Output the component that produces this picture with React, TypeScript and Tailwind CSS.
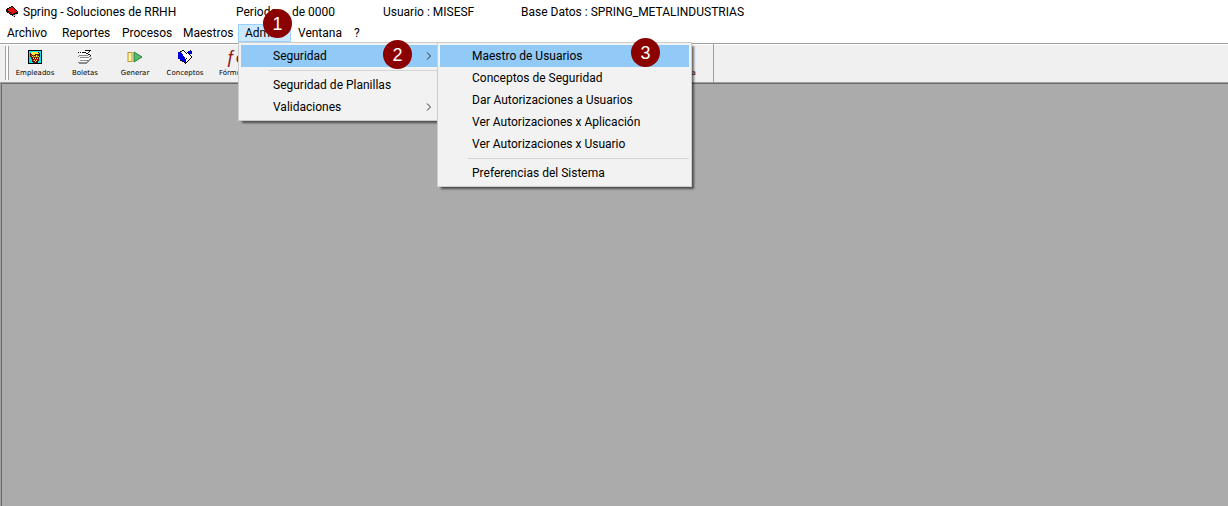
import React from 'react';

interface MenuEntry {
  label: string;
  active?: boolean;
  submenu?: boolean;
  separated?: boolean;
}

const adminMenu: MenuEntry[] = [
  { label: 'Seguridad', active: true, submenu: true },
  { label: 'Seguridad de Planillas', separated: true },
  { label: 'Validaciones', submenu: true },
];

const seguridadMenu: MenuEntry[] = [
  { label: 'Maestro de Usuarios', active: true },
  { label: 'Conceptos de Seguridad' },
  { label: 'Dar Autorizaciones a Usuarios' },
  { label: 'Ver Autorizaciones x Aplicación' },
  { label: 'Ver Autorizaciones x Usuario' },
  { label: 'Preferencias del Sistema', separated: true },
];

const BookIcon = () => (
  <svg width="12" height="12" viewBox="0 0 12 12" shapeRendering="crispEdges">
    <path d="M0 3h1V2h2V1h2V0h2v1h1v1h1v1h1v1h1v1h1v3h-1v1h-1v1H9v1H7v-1H6v-1H4V8H3V7H1V6H0z" fill="#111" />
    <path d="M2 3h1V2h2V1h2v1h1v1h1v1h1v1h1v1H9v1H7v1H6V7H5V6H3V5H2z" fill="#e81010" />
    <path d="M7 9h2V8h2v1h-1v1H8v1H7z" fill="#c8c8c8" />
    <path d="M1 5h1v1h2v1h1v1H4V7H2V6H1z" fill="#8b0000" />
  </svg>
);

const EmpleadosIcon = () => (
  <svg width="14" height="14" viewBox="0 0 14 14" shapeRendering="crispEdges">
    <path d="M0 0h14v14H0z" fill="#000" />
    <path d="M1 1h12v12H1z" fill="#00e5ee" />
    <path d="M3 2h8v1h1v4h-1v4h-1v2H5v-1H4V9H3V7H2V3h1z" fill="#5a1000" />
    <path d="M3 2h7v1h1v1H7v1H4V4H3zM4 6h1v1H4zM6 6h1v1H6zM8 5h1v2H8zM10 6h1v1h-1zM5 8h1v1H5zM7 8h1v1H7zM9 8h1v1H9zM6 10h1v1H6zM8 10h1v1H8zM7 11h1v1H7z" fill="#ffe83a" />
    <path d="M3 5h1v1H3zM5 5h1v3H5zM7 6h1v2H7zM9 5h1v3H9zM6 9h1v1H6zM8 9h1v1H8zM5 10h1v1H5z" fill="#f03010" />
  </svg>
);

const BoletasIcon = () => (
  <svg width="16" height="16" viewBox="0 0 16 16" shapeRendering="crispEdges">
    <path d="M4 2h10v2l-3 2H3V4zM4 9h9l-3 5H2z" fill="#fff" />
    <path d="M8 1h6v1H8zM12 2h1v1h-1zM11 3h1v1h-1zM9 4h2v1H9zM11 5h2v1h-2zM13 6h1v1h-1zM5 3h4v1H5zM1 3h1v1H1zM3 3h1v1H3z" fill="#111" />
    <path d="M2 6h9v1H2zM1 7h1v1H1zM12 7h2v1h-2zM11 8h1v1h-1zM3 8h9v1H3zM13 9h2v1h-2zM12 10h2v1h-2zM11 11h2v1h-2zM10 12h2v1h-2zM3 11h8v1H3zM1 13h10v1H1zM2 14h8v1H2z" fill="#8a8a8a" />
  </svg>
);

const GenerarIcon = () => (
  <svg width="16" height="12" viewBox="0 0 16 12">
    <rect x="1" y="1.5" width="4" height="9" fill="#fff3a8" stroke="#c29a25" />
    <path d="M7 1v10l8-5z" fill="#58b96b" stroke="#268443" />
  </svg>
);

const ConceptosIcon = () => (
  <svg width="16" height="16" viewBox="0 0 16 16" shapeRendering="crispEdges">
    <path d="M4 3l5-1 5 6-6 6z" fill="#fff" />
    <path d="M1 3h3v1h1v1h1v2h1v1h1v2h1v4H7v-1H5v-1H4v-1H3v-1H1z" fill="#0000d8" />
    <path d="M11 2h3v3h-2V4h-1z" fill="#0000d8" />
    <path d="M3 2h2v1H3zM5 1h2v1H5zM7 2h1v1H7zM8 3h1v1H8zM9 4h1v1H9zM10 3h1v1h-1zM11 4h1v1h-1zM12 5h1v1h-1zM13 6h1v1h-1zM14 7h1v2h-1zM13 9h1v1h-1zM12 10h1v1h-1zM11 11h1v1h-1zM10 12h1v1h-1zM9 13h1v1H9zM8 14h1v1H8zM7 13h1v1H7zM5 12h2v1H5zM3 11h2v1H3zM13 1h1v1h-1zM14 2h1v3h-1zM8 10h1v3H8zM9 9h1v1H9z" fill="#000" />
  </svg>
);

const FormulasIcon = () => (
  <span className="font-['Liberation_Sans',sans-serif] text-lg leading-5 text-[#8b1a1a]">
    ƒ<b className="text-sm">e</b>
  </span>
);

const tools = [
  { label: 'Empleados', icon: <EmpleadosIcon /> },
  { label: 'Boletas', icon: <BoletasIcon /> },
  { label: 'Generar', icon: <GenerarIcon /> },
  { label: 'Conceptos', icon: <ConceptosIcon /> },
  { label: 'Fórmulas', icon: <FormulasIcon /> },
];

const ToolButton: React.FC<{ label: string; icon?: React.ReactNode }> = ({ label, icon }) => (
  <button type="button" className="flex w-[50px] shrink-0 flex-col items-center pt-[3px]">
    <span className="flex h-5 items-center justify-center">{icon}</span>
    <span className="mt-px font-['DejaVu_Sans',sans-serif] text-[7px] leading-[10px]">{label}</span>
  </button>
);

const Badge: React.FC<{ value: number; className: string }> = ({ value, className }) => (
  <span
    className={`absolute z-30 flex size-[29px] items-center justify-center rounded-full bg-[#8b0000] font-['Liberation_Sans',sans-serif] text-lg leading-none text-white ${className}`}
  >
    {value}
  </span>
);

const PopupMenu: React.FC<{ items: MenuEntry[]; className: string; children?: React.ReactNode }> = ({ items, className, children }) => (
  <div className={`absolute border border-[#ccc] bg-[#f2f2f2] p-0.5 shadow-[3px_3px_2px_-1px_rgba(0,0,0,0.55)] ${className}`}>
    {items.map((item) => (
      <React.Fragment key={item.label}>
        {item.separated && <hr className="my-[3px] ml-7 border-[#d4d4d4]" />}
        <button
          type="button"
          className={`flex h-[22px] w-full items-center justify-between whitespace-nowrap pr-1 pl-8 text-left ${item.active ? 'bg-[#91c9f7]' : ''}`}
        >
          {item.label}
          {item.submenu && (
            <svg width="8" height="8" viewBox="0 0 8 8" fill="none" stroke="#333">
              <path d="M2 0.5 5.5 4 2 7.5" />
            </svg>
          )}
        </button>
      </React.Fragment>
    ))}
    {children}
  </div>
);

const App: React.FC = () => {
  return (
    <div className="flex min-h-screen flex-col overflow-x-hidden bg-[#ababab] font-['Roboto','Open_Sans',sans-serif] text-[12px] leading-4 text-black">
      {/* Title bar */}
      <header className="flex h-6 items-center bg-white pl-1.5 whitespace-nowrap">
        <BookIcon />
        <span className="ml-[5px] w-[213px]">Spring - Soluciones de RRHH</span>
        <span className="w-14">Periodo</span>
        <span className="w-[91px]">de 0000</span>
        <span className="w-[138px]">Usuario : MISESF</span>
        <span>Base Datos : SPRING_METALINDUSTRIAS</span>
      </header>

      {/* Menu bar */}
      <nav className="flex h-[19px] items-start bg-white">
        <button type="button" className="h-[18px] w-[55px] pl-[7px] text-left">Archivo</button>
        <button type="button" className="h-[18px] w-[60px] pl-[7px] text-left">Reportes</button>
        <button type="button" className="h-[18px] w-[61px] pl-[7px] text-left">Procesos</button>
        <button type="button" className="h-[18px] w-[62px] pl-[7px] text-left">Maestros</button>
        <div className="relative h-[18px] w-[53px]">
          <button type="button" className="h-[18px] w-full border border-[#99d1ff] bg-[#cce8ff] pl-1.5 text-left">Admin.</button>
          <Badge value={1} className="-top-[15px] left-[25px]" />
          <PopupMenu items={adminMenu} className="top-[18px] left-0 z-10 w-[202px]">
            <Badge value={2} className="-top-[3px] left-[144px]" />
            <PopupMenu items={seguridadMenu} className="-top-px left-[198px] z-20 w-[255px]">
              <Badge value={3} className="-top-[5px] left-[193px]" />
            </PopupMenu>
          </PopupMenu>
        </div>
        <button type="button" className="h-[18px] w-14 pl-[7px] text-left">Ventana</button>
        <button type="button" className="h-[18px] px-[7px]">?</button>
      </nav>

      {/* Toolbar */}
      <div className="flex h-10 border-y border-[#a0a0a0] bg-[#f0f0f0] pl-[5px] shadow-[inset_0_1px_#fff]">
        <div className="my-0.5 mr-px w-1 border-x border-[#a0a0a0] bg-white" />
        {tools.map((tool) => (
          <ToolButton key={tool.label} label={tool.label} icon={tool.icon} />
        ))}
        <div className="w-[400px]" />
        <ToolButton label="Salida" />
        <div className="ml-[3px] w-px bg-[#a0a0a0]" />
      </div>

      <div className="flex grow border-l border-[#a0a0a0]">
        <main className="grow border-t border-l border-[#696969]" />
      </div>
    </div>
  );
};

export default App;
